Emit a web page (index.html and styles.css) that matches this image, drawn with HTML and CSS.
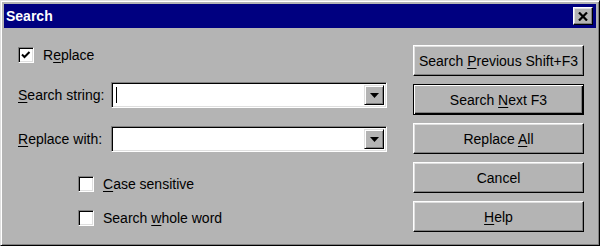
FILE: index.html
```html
<!DOCTYPE html>
<html lang="en">
<head>
  <meta charset="UTF-8">
  <title>Search</title>
  <link rel="stylesheet" href="styles.css">
</head>
<body>
  <div class="window">
    <div class="titlebar">
      <span class="title">Search</span>
      <button class="close" aria-label="Close">
        <svg width="10" height="9" viewBox="0 0 10 9"><path d="M1 0.5 L9 8.5 M9 0.5 L1 8.5" stroke="#000" stroke-width="2.2" fill="none"/></svg>
      </button>
    </div>

    <div class="content">
      <div class="form">
        <label class="check check-replace">
          <span class="box">
            <svg width="12" height="12" viewBox="0 0 12 12"><path d="M2 5.5 L4.5 8 L9.5 3" stroke="#000" stroke-width="2" fill="none"/></svg>
          </span>
          <span>R<u>e</u>place</span>
        </label>

        <div class="field field-search">
          <span class="field-label"><u>S</u>earch string:</span>
          <div class="combo">
            <div class="combo-text"><span class="caret"></span></div>
            <span class="combo-btn"><svg width="9" height="5" viewBox="0 0 9 5"><path d="M0 0 H9 L4.5 5 Z" fill="#000"/></svg></span>
          </div>
        </div>

        <div class="field field-replace">
          <span class="field-label"><u>R</u>eplace with:</span>
          <div class="combo">
            <div class="combo-text"></div>
            <span class="combo-btn"><svg width="9" height="5" viewBox="0 0 9 5"><path d="M0 0 H9 L4.5 5 Z" fill="#000"/></svg></span>
          </div>
        </div>

        <label class="check check-option check-case">
          <span class="box"></span>
          <span><u>C</u>ase sensitive</span>
        </label>
        <label class="check check-option check-word">
          <span class="box"></span>
          <span>Search <u>w</u>hole word</span>
        </label>
      </div>

      <div class="actions">
        <button class="btn">Search <u>P</u>revious Shift+F3</button>
        <button class="btn btn-default">Search <u>N</u>ext F3</button>
        <button class="btn">Replace <u>A</u>ll</button>
        <button class="btn">Cancel</button>
        <button class="btn"><u>H</u>elp</button>
      </div>
    </div>
  </div>
</body>
</html>
```

FILE: styles.css
```css
html, body {
  margin: 0;
  padding: 0;
  background-color: #ffffff;
}
body {
  font-family: "Liberation Sans", Arial, sans-serif;
  font-size: 14px;
  color: #000;
}
u {
  text-decoration-thickness: 1px;
  text-underline-offset: 2px;
}
.window {
  box-sizing: border-box;
  width: 600px;
  height: 246px;
  background-color: #b4b4b4;
  border: 1px solid;
  border-color: #dfdfdf #000 #000 #dfdfdf;
  box-shadow: inset 1px 1px #fff, inset -1px -1px #808080;
  padding: 3px;
  display: flex;
  flex-direction: column;
}
.titlebar {
  height: 24px;
  background-color: #000080;
  display: flex;
  align-items: center;
  justify-content: space-between;
  padding: 0 3px 0 2px;
}
.title {
  color: #fff;
  font-weight: bold;
  font-size: 14px;
}
.close {
  box-sizing: border-box;
  width: 20px;
  height: 18px;
  padding: 0;
  background-color: #b4b4b4;
  border: 1px solid;
  border-color: #fff #000 #000 #fff;
  box-shadow: inset -1px -1px #808080, inset 1px 1px #dfdfdf;
  display: flex;
  align-items: center;
  justify-content: center;
}
.content {
  flex: 1;
  display: flex;
  justify-content: space-between;
  padding: 17px 12px 0 14px;
}
.form {
  display: flex;
  flex-direction: column;
}
.check {
  display: flex;
  align-items: center;
  gap: 9px;
  height: 20px;
}
.box {
  box-sizing: border-box;
  width: 16px;
  height: 16px;
  background-color: #fff;
  border: 1px solid;
  border-color: #808080 #fff #fff #808080;
  box-shadow: inset 1px 1px #000, inset -1px -1px #dfdfdf;
  display: flex;
  align-items: center;
  justify-content: center;
}
.check-option {
  margin-left: 60px;
}
.check-case {
  margin-top: 22px;
}
.check-word {
  margin-top: 14px;
}
.field {
  display: flex;
  align-items: center;
}
.field-search {
  margin-top: 17px;
}
.field-replace {
  margin-top: 18px;
}
.field-label {
  width: 93px;
}
.combo {
  box-sizing: border-box;
  width: 276px;
  height: 26px;
  background-color: #fff;
  border: 1px solid;
  border-color: #808080 #fff #fff #808080;
  box-shadow: inset 1px 1px #000, inset -1px -1px #dfdfdf;
  padding: 2px;
  display: flex;
}
.combo-text {
  flex: 1;
  display: flex;
  align-items: center;
  padding-left: 2px;
}
.caret {
  width: 1px;
  height: 16px;
  background-color: #000;
}
.combo-btn {
  box-sizing: border-box;
  width: 20px;
  background-color: #b4b4b4;
  border: 1px solid;
  border-color: #dfdfdf #000 #000 #dfdfdf;
  box-shadow: inset 1px 1px #fff, inset -1px -1px #808080;
  display: flex;
  align-items: center;
  justify-content: center;
}
.actions {
  width: 171px;
  display: flex;
  flex-direction: column;
  gap: 8px;
}
.btn {
  box-sizing: border-box;
  height: 31px;
  padding: 0;
  font-family: inherit;
  font-size: 14px;
  color: #000;
  background-color: #b4b4b4;
  border: 1px solid;
  border-color: #fff #000 #000 #fff;
  box-shadow: inset -1px -1px #808080, inset 1px 1px #dfdfdf;
}
.btn-default {
  border: 1px solid #000;
  box-shadow: inset 1px 1px #fff, inset -1px -1px #000, inset -2px -2px #808080;
}
```
